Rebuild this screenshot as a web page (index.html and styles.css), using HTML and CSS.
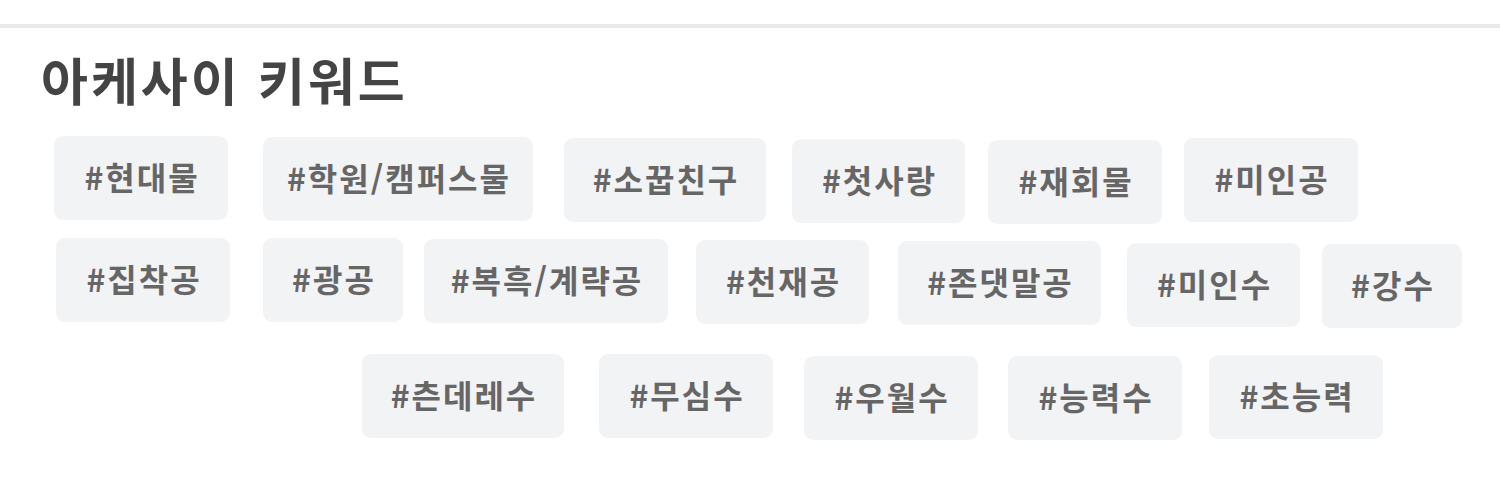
FILE: index.html
```html
<!DOCTYPE html>
<html lang="ko">
<head>
<meta charset="utf-8">
<title>아케사이 키워드</title>
<link rel="stylesheet" href="styles.css">
</head>
<body>
<div class="topline"></div>
<section class="keywords">
  <h2 class="title">아케사이 키워드</h2>
  <div class="row r1">
    <span class="tag">#현대물</span>
    <span class="tag">#학원/캠퍼스물</span>
    <span class="tag">#소꿉친구</span>
    <span class="tag">#첫사랑</span>
    <span class="tag">#재회물</span>
    <span class="tag">#미인공</span>
  </div>
  <div class="row r2">
    <span class="tag">#집착공</span>
    <span class="tag">#광공</span>
    <span class="tag">#복흑/계략공</span>
    <span class="tag">#천재공</span>
    <span class="tag">#존댓말공</span>
    <span class="tag">#미인수</span>
    <span class="tag">#강수</span>
  </div>
  <div class="row r3">
    <span class="tag">#츤데레수</span>
    <span class="tag">#무심수</span>
    <span class="tag">#우월수</span>
    <span class="tag">#능력수</span>
    <span class="tag">#초능력</span>
  </div>
</section>
</body>
</html>
```
FILE: styles.css
```css
html, body {
  margin: 0;
  padding: 0;
  background: #ffffff;
}
body {
  font-family: "Noto Sans CJK KR", "Noto Sans", sans-serif;
  width: 1500px;
  height: 500px;
  overflow: hidden;
}
.topline {
  margin-top: 24px;
  height: 4px;
  background: #e9e9e9;
}
.keywords {
  display: flex;
  flex-direction: column;
}
.title {
  margin: 20px 0 0 0;
  padding-left: 41px;
  height: 62px;
  line-height: 62px;
  font-size: 51px;
  font-weight: 700;
  color: #444444;
  letter-spacing: 3px;
}
.row {
  display: flex;
  align-items: flex-start;
}
.tag {
  flex: none;
  display: flex;
  align-items: center;
  justify-content: center;
  box-sizing: border-box;
  height: 84px;
  padding: 0 0 4px 2px;
  border-radius: 9px;
  background: #f2f3f5;
  color: #666666;
  font-size: 32px;
  font-weight: 700;
  letter-spacing: 2px;
  white-space: nowrap;
}

/* row 1 */
.r1 { margin-top: 26px; margin-left: 54px; }
.r1 .tag:nth-child(1) { width: 174px; margin-top: 0; }
.r1 .tag:nth-child(2) { width: 270px; margin-top: 1px; margin-left: 35px; }
.r1 .tag:nth-child(3) { width: 202px; margin-top: 2px; margin-left: 31px; }
.r1 .tag:nth-child(4) { width: 173px; margin-top: 3px; margin-left: 26px; }
.r1 .tag:nth-child(5) { width: 174px; margin-top: 4px; margin-left: 23px; }
.r1 .tag:nth-child(6) { width: 174px; margin-top: 2px; margin-left: 22px; }

/* row 2 */
.r2 { margin-top: 14px; margin-left: 56px; }
.r2 .tag:nth-child(1) { width: 174px; margin-top: 0; }
.r2 .tag:nth-child(2) { width: 140px; margin-top: 0; margin-left: 33px; }
.r2 .tag:nth-child(3) { width: 244px; margin-top: 1px; margin-left: 21px; }
.r2 .tag:nth-child(4) { width: 173px; margin-top: 2px; margin-left: 28px; }
.r2 .tag:nth-child(5) { width: 203px; margin-top: 3px; margin-left: 29px; }
.r2 .tag:nth-child(6) { width: 173px; margin-top: 5px; margin-left: 26px; }
.r2 .tag:nth-child(7) { width: 140px; margin-top: 6px; margin-left: 22px; }

/* row 3 */
.r3 { margin-top: 26px; margin-left: 362px; }
.r3 .tag:nth-child(1) { width: 202px; margin-top: 0; }
.r3 .tag:nth-child(2) { width: 174px; margin-top: 0; margin-left: 35px; }
.r3 .tag:nth-child(3) { width: 174px; margin-top: 2px; margin-left: 31px; }
.r3 .tag:nth-child(4) { width: 174px; margin-top: 2px; margin-left: 30px; }
.r3 .tag:nth-child(5) { width: 174px; margin-top: 1px; margin-left: 27px; }
```
